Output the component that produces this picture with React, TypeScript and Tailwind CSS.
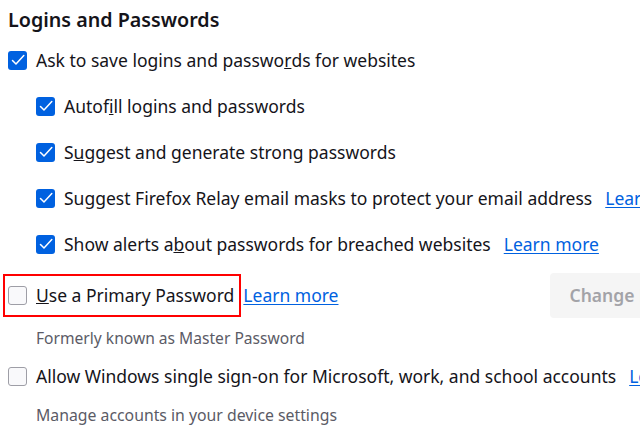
import type { ReactNode } from "react";

function Checkbox({ checked }: { checked: boolean }) {
  if (checked) {
    return (
      <span className="flex h-[19px] w-[19px] flex-shrink-0 items-center justify-center rounded-[3px] bg-[#0061e0]">
        <svg width="16" height="16" viewBox="0 0 16 16" fill="none">
          <path
            d="M2.5 8.5 L6 12 L13.8 3.5"
            stroke="white"
            strokeWidth="1.5"
            strokeLinecap="round"
            strokeLinejoin="round"
          />
        </svg>
      </span>
    );
  }
  return (
    <span className="h-[19px] w-[19px] flex-shrink-0 rounded-[3px] border border-[#9e9ea6] bg-[#f9f9fb]" />
  );
}

function Link({ children }: { children: ReactNode }) {
  return <span className="text-[#0061e0] underline underline-offset-2">{children}</span>;
}

function Row({
  checked,
  indent,
  h,
  children,
}: {
  checked: boolean;
  indent?: boolean;
  h: string;
  children: ReactNode;
}) {
  return (
    <div className={`flex items-center whitespace-nowrap ${h} ${indent ? "pl-[28px]" : ""}`}>
      <Checkbox checked={checked} />
      <div className="ml-[9px] flex items-center">{children}</div>
    </div>
  );
}

export default function App() {
  return (
    <div
      className="h-[440px] w-[640px] overflow-hidden bg-white pl-[8px] text-[17.5px] text-[#15141a]"
      style={{ fontFamily: '"Noto Sans", sans-serif' }}
    >
      <div className="h-[37px] pt-[8px] text-[19.7px] font-semibold leading-[24px]">
        Logins and Passwords
      </div>

      <Row checked h="h-[46px]">
        Ask to save logins and passwo<u>r</u>ds for websites
      </Row>
      <Row checked indent h="h-[46px]">
        Autof<u>i</u>ll logins and passwords
      </Row>
      <Row checked indent h="h-[46px]">
        S<u>u</u>ggest and generate strong passwords
      </Row>
      <Row checked indent h="h-[46px]">
        <span>Suggest Firefox Relay email masks to protect your email address</span>
        <span className="ml-[13px]">
          <Link>Learn more</Link>
        </span>
      </Row>
      <Row checked indent h="h-[46px]">
        <span>
          Show alerts a<u>b</u>out passwords for breached websites
        </span>
        <span className="ml-[13px]">
          <Link>Learn more</Link>
        </span>
      </Row>

      <div className="flex h-[56px] items-center whitespace-nowrap">
        <div className="-ml-[5px] flex h-[43px] items-center border-2 border-[#ff0000] pl-[3px] pr-[5px]">
          <Checkbox checked={false} />
          <span className="ml-[9px]">
            <u>U</u>se a Primary Password
          </span>
        </div>
        <span className="ml-[2px]">
          <Link>Learn more</Link>
        </span>
        <button className="ml-[211px] flex h-[45px] items-center rounded-[4px] bg-[#f5f5f5] pl-[20px] pr-[20px] font-semibold text-[#a3a3a8]">
          Change Primary Password…
        </button>
      </div>

      <div className="flex h-[32px] items-center pl-[28px] text-[15.6px] text-[#5b5b66]">
        Formerly known as Master Password
      </div>

      <Row checked={false} h="h-[43px]">
        <span>Allow Windows single sign-on for Microsoft, work, and school accounts</span>
        <span className="ml-[13px]">
          <Link>Learn more</Link>
        </span>
      </Row>

      <div className="flex h-[36px] items-center pl-[28px] text-[15.8px] text-[#5b5b66]">
        Manage accounts in your device settings
      </div>
    </div>
  );
}
